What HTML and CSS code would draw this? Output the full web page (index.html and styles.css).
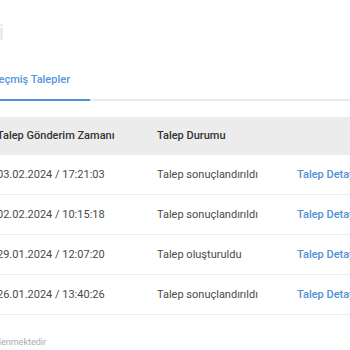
FILE: index.html
```
<!DOCTYPE html>
<html lang="tr">
<head>
<meta charset="utf-8">
<link rel="stylesheet" href="styles.css">
</head>
<body>
<div class="viewport">
  <div class="heading-row"><h1 class="heading">Taleplerimi</h1></div>
  <div class="tabs">
    <div class="tab active">Geçmiş Talepler</div>
  </div>
  <table class="table">
    <thead>
      <tr><th class="c1">Talep Gönderim Zamanı</th><th class="c2">Talep Durumu</th><th class="c3"></th></tr>
    </thead>
    <tbody>
      <tr><td class="c1">03.02.2024 / 17:21:03</td><td class="c2">Talep sonuçlandırıldı</td><td class="c3"><a class="link">Talep Detayı</a></td></tr>
      <tr><td class="c1">02.02.2024 / 10:15:18</td><td class="c2">Talep sonuçlandırıldı</td><td class="c3"><a class="link">Talep Detayı</a></td></tr>
      <tr><td class="c1">29.01.2024 / 12:07:20</td><td class="c2">Talep oluşturuldu</td><td class="c3"><a class="link">Talep Detayı</a></td></tr>
      <tr><td class="c1">26.01.2024 / 13:40:26</td><td class="c2">Talep sonuçlandırıldı</td><td class="c3"><a class="link">Talep Detayı</a></td></tr>
    </tbody>
  </table>
  <div class="note-row"><p class="note">Talepler listelenmektedir</p></div>
</div>
</body>
</html>
```
FILE: styles.css
```
html, body {
  margin: 0;
  padding: 0;
  background: #fff;
  overflow: hidden;
}
body {
  font-family: Roboto, "Noto Sans", "Liberation Sans", sans-serif;
  color: #4a4a4a;
  width: 350px;
  height: 350px;
}
.viewport {
  width: 350px;
  height: 350px;
  overflow: hidden;
}
.heading-row {
  height: 58px;
  display: flex;
  justify-content: flex-end;
  width: 4px;
  overflow: visible;
}
.heading {
  margin: 0;
  padding-top: 19px;
  font-size: 22px;
  font-weight: 400;
  color: #e4e4e4;
  white-space: nowrap;
  line-height: 28px;
}
.tabs {
  display: flex;
  border-bottom: 2px solid #e8e8e8;
  margin-left: -31px;
}
.tab {
  padding: 13px 20px 10px 22px;
  font-size: 11px;
  line-height: 18px;
  font-weight: 500;
  color: #5596dc;
  margin-bottom: -2px;
}
.tab.active {
  border-bottom: 2px solid #4f90d8;
}
.table {
  margin-top: 16px;
  margin-left: -3px;
  border-collapse: collapse;
  width: 420px;
  font-size: 11px;
}
.table th {
  background: #ececec;
  height: 37px;
  padding: 0 0 1px 0;
  text-align: left;
  font-weight: 500;
  color: #333;
}
.table td {
  height: 39px;
  padding: 0;
  border-bottom: 1px solid #ececec;
  color: #4a4a4a;
}
.c1 { width: 160px; }
.c2 { width: 140px; }
.link {
  color: #4f90d8;
  font-weight: 500;
  white-space: nowrap;
}
.note-row {
  display: flex;
  justify-content: flex-end;
  width: 46px;
  margin-top: 22px;
}
.note {
  margin: 0;
  font-size: 9px;
  color: #aaa;
  white-space: nowrap;
}
```
